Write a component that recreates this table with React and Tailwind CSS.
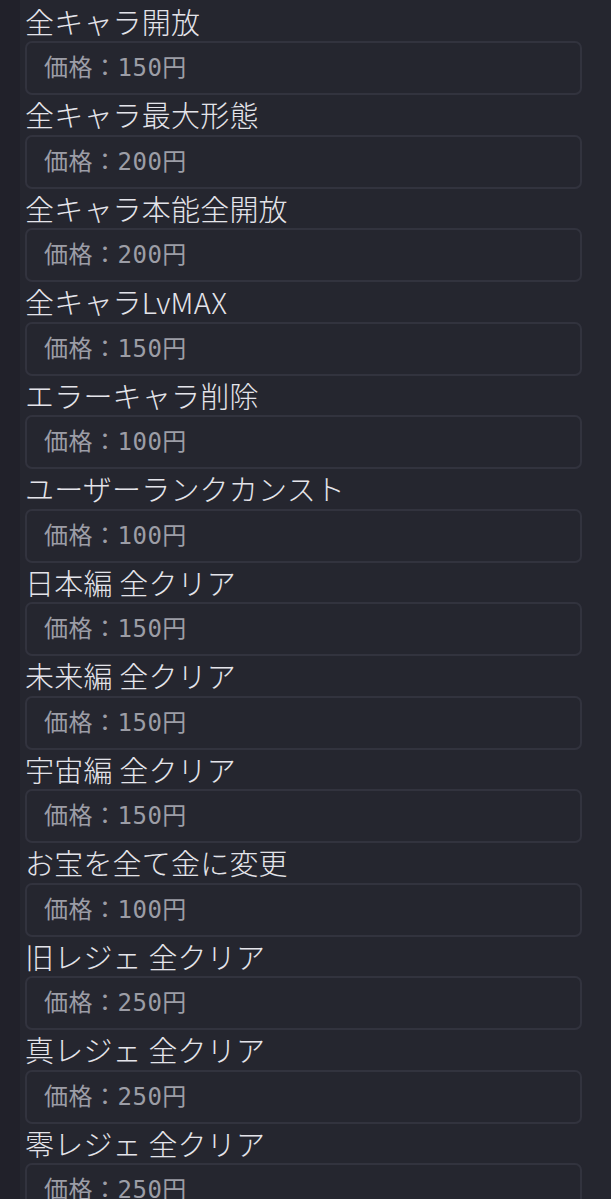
const items = [
  ["全キャラ開放", "150"],
  ["全キャラ最大形態", "200"],
  ["全キャラ本能全開放", "200"],
  ["全キャラLvMAX", "150"],
  ["エラーキャラ削除", "100"],
  ["ユーザーランクカンスト", "100"],
  ["日本編 全クリア", "150"],
  ["未来編 全クリア", "150"],
  ["宇宙編 全クリア", "150"],
  ["お宝を全て金に変更", "100"],
  ["旧レジェ 全クリア", "250"],
  ["真レジェ 全クリア", "250"],
  ["零レジェ 全クリア", "250"],
];

export default function App() {
  return (
    <div className="h-[1199px] w-[611px] overflow-hidden bg-[#21212a]">
      <div className="ml-[20px] h-full bg-[#25262f] pt-[1.5px] pl-[5px] pr-[29px]">
        {items.map(([title, price]) => (
          <div key={title}>
            <div
              className="h-[39.5px] text-[29px] font-light leading-[39.5px] tracking-[0.2px] text-[#e4e4ea]"
              style={{ fontFamily: '"Noto Sans CJK JP", "Noto Sans", sans-serif' }}
            >
              {title}
            </div>
            <div className="flex h-[54px] items-center rounded-[7px] border-2 border-[#32333e] pl-[17px]">
              <span
                className="text-[24px] tracking-[0.5px] text-[#9c9da6]"
                style={{ fontFamily: '"DejaVu Sans Mono", "Noto Sans CJK JP", monospace' }}
              >
                価格：{price}円
              </span>
            </div>
          </div>
        ))}
      </div>
    </div>
  );
}
